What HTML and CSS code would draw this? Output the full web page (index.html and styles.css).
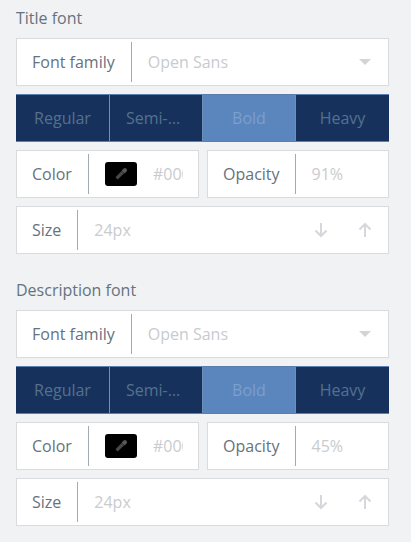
FILE: index.html
```html
<!DOCTYPE html>
<html lang="en">
<head>
<meta charset="utf-8">
<title>Font settings</title>
<link rel="stylesheet" href="styles.css">
</head>
<body>
<main class="panel">
  <section class="group">
    <h2 class="group-title">Title font</h2>
    <div class="field">
      <span class="field-label">Font family</span>
      <span class="field-value grow">Open Sans</span>
      <svg class="caret" width="12" height="6" viewBox="0 0 12 6"><path d="M0 0h12L6 6z"/></svg>
    </div>
    <div class="weights">
      <span class="weight">Regular</span>
      <span class="weight">Semi-bold</span>
      <span class="weight active">Bold</span>
      <span class="weight">Heavy</span>
    </div>
    <div class="pair">
      <div class="field">
        <span class="field-label">Color</span>
        <span class="swatch"><svg width="16" height="16" viewBox="0 0 16 16"><path class="dropper-tube" d="M3.600 12.400l6.400-6.400"/><path class="dropper-head" d="M8.600 4.600l1.800-1.800a2.100 2.100 0 0 1 3 3l-1.800 1.800z"/></svg></span>
        <span class="hex">#000000</span>
      </div>
      <div class="field">
        <span class="field-label">Opacity</span>
        <span class="field-value">91%</span>
      </div>
    </div>
    <div class="field">
      <span class="field-label">Size</span>
      <span class="field-value grow">24px</span>
      <span class="steppers">
        <svg class="arrow" width="14" height="16" viewBox="0 0 14 16"><path d="M7 1v13M1.500 8.500L7 14l5.500-5.500"/></svg>
        <svg class="arrow" width="14" height="16" viewBox="0 0 14 16"><path d="M7 15V2M1.500 7.500L7 2l5.500 5.500"/></svg>
      </span>
    </div>
  </section>
  <section class="group">
    <h2 class="group-title">Description font</h2>
    <div class="field">
      <span class="field-label">Font family</span>
      <span class="field-value grow">Open Sans</span>
      <svg class="caret" width="12" height="6" viewBox="0 0 12 6"><path d="M0 0h12L6 6z"/></svg>
    </div>
    <div class="weights">
      <span class="weight">Regular</span>
      <span class="weight">Semi-bold</span>
      <span class="weight active">Bold</span>
      <span class="weight">Heavy</span>
    </div>
    <div class="pair">
      <div class="field">
        <span class="field-label">Color</span>
        <span class="swatch"><svg width="16" height="16" viewBox="0 0 16 16"><path class="dropper-tube" d="M3.600 12.400l6.400-6.400"/><path class="dropper-head" d="M8.600 4.600l1.800-1.800a2.100 2.100 0 0 1 3 3l-1.800 1.800z"/></svg></span>
        <span class="hex">#000000</span>
      </div>
      <div class="field">
        <span class="field-label">Opacity</span>
        <span class="field-value">45%</span>
      </div>
    </div>
    <div class="field">
      <span class="field-label">Size</span>
      <span class="field-value grow">24px</span>
      <span class="steppers">
        <svg class="arrow" width="14" height="16" viewBox="0 0 14 16"><path d="M7 1v13M1.500 8.500L7 14l5.500-5.500"/></svg>
        <svg class="arrow" width="14" height="16" viewBox="0 0 14 16"><path d="M7 15V2M1.500 7.500L7 2l5.500 5.500"/></svg>
      </span>
    </div>
  </section>
</main>
</body>
</html>
```
FILE: styles.css
```css
* { box-sizing: border-box; }
html, body { margin: 0; padding: 0; }
body {
  width: 411px;
  height: 542px;
  overflow: hidden;
  background: #f0f2f4;
  font-family: "Open Sans", "Liberation Sans", sans-serif;
  font-size: 16px;
  color: #66727e;
}
.panel {
  display: flex;
  flex-direction: column;
  gap: 26px;
  padding: 8px 22px 0 16px;
}
.group {
  display: flex;
  flex-direction: column;
  gap: 8px;
}
.group-title {
  margin: 0 0 2px;
  height: 20px;
  font-size: 16px;
  line-height: 20px;
  font-weight: 400;
  color: #66727e;
}
.field {
  display: flex;
  align-items: center;
  min-width: 0;
  height: 48px;
  background: #fff;
  border: 1px solid #d9dbde;
}
.pair > .field { flex: 1 1 0; }
.pair > .field:first-child { flex: 0 0 183px; }
.field-label {
  display: flex;
  align-items: center;
  flex: none;
  height: 40px;
  padding: 0 16px 0 15px;
  border-right: 1px solid #a2a9af;
  white-space: nowrap;
}
.pair > .field:last-child .field-label { padding-right: 15px; }
.field-value {
  padding-left: 16px;
  color: #c9cbce;
  white-space: nowrap;
}
.grow { flex: 1; }
.caret { margin-right: 17px; fill: #d2d4d7; }
.steppers { display: flex; gap: 30px; margin-right: 16px; }
.arrow {
  fill: none;
  stroke: #d5d7da;
  stroke-width: 2;
}
.weights {
  display: flex;
  height: 48px;
  border: 1px solid #5b7fae;
  border-width: 1px 0;
  background: #16325c;
}
.weight {
  flex: 0 0 93px;
  padding: 0 16px;
  overflow: hidden;
  line-height: 46px;
  text-align: center;
  text-overflow: ellipsis;
  white-space: nowrap;
  color: #55708f;
  border-left: 1px solid #6f8fb8;
}
.weight:first-child { border-left: 0; }
.weight:last-child { flex: 1 1 0; }
.weight.active {
  background: #5b86bd;
  color: #7c9fcd;
}
.pair { display: flex; gap: 8px; }
.swatch {
  flex: none;
  display: flex;
  align-items: center;
  justify-content: center;
  width: 32px;
  height: 24px;
  margin-left: 16px;
  background: #000;
  border-radius: 3px;
}
.dropper-tube { fill: none; stroke: #484848; stroke-width: 3.200; }
.dropper-head { fill: #585858; }
.hex {
  flex: 1;
  min-width: 0;
  margin: 0 15px 0 16px;
  overflow: hidden;
  color: #c9cbce;
  white-space: nowrap;
}
```
